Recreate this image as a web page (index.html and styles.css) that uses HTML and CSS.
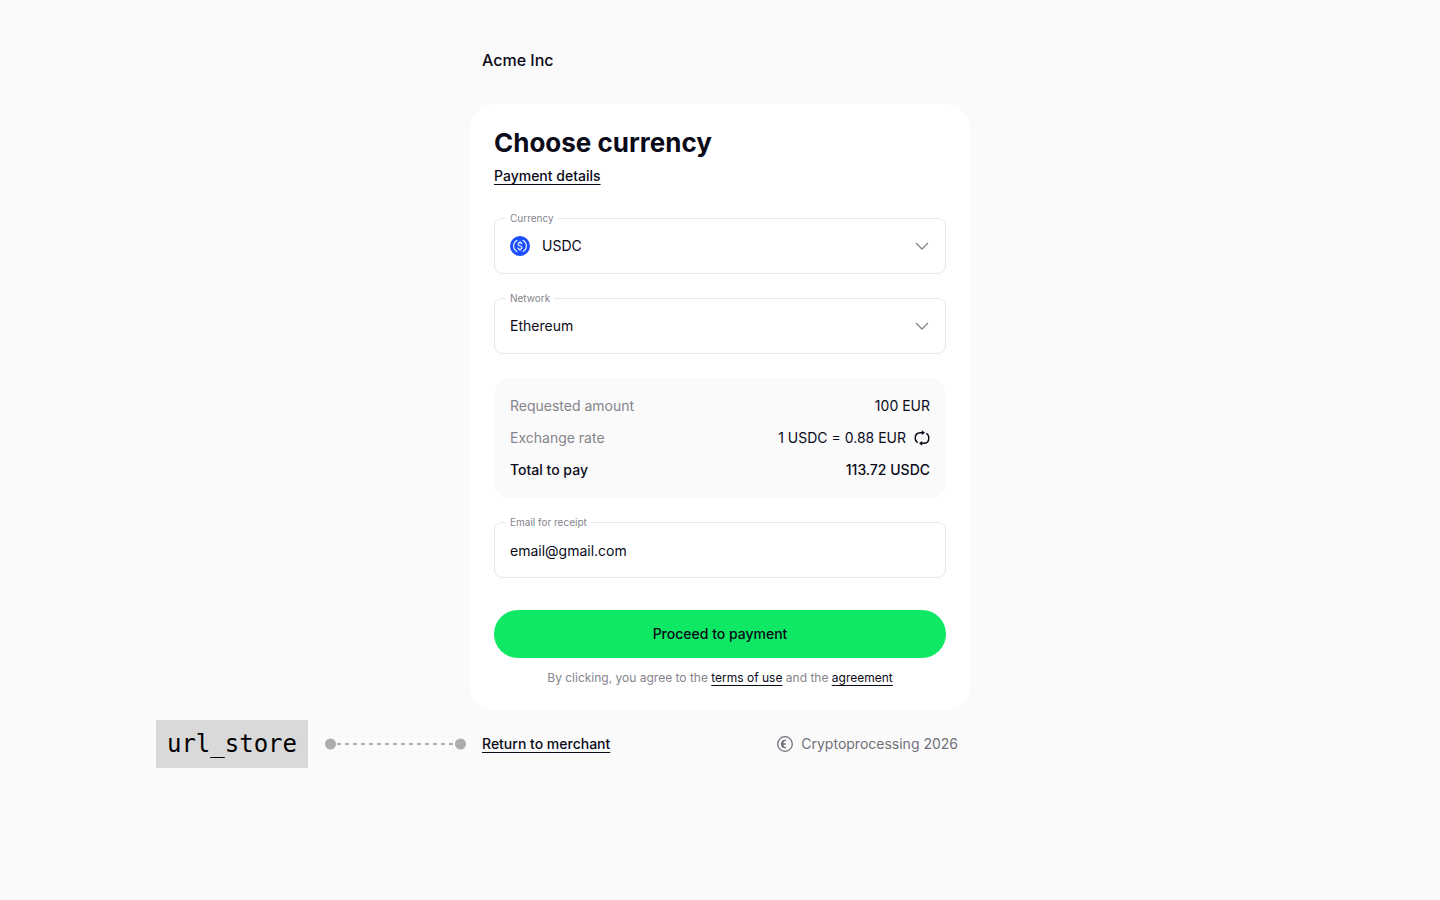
FILE: index.html
```html
<!DOCTYPE html>
<html lang="en">
<head>
<meta charset="utf-8">
<meta name="viewport" content="width=device-width, initial-scale=1">
<title>Choose currency</title>
<link rel="stylesheet" href="styles.css">
</head>
<body>
<div class="page">
  <header class="merchant">Acme Inc</header>
  <main class="card">
    <h1 class="title">Choose currency</h1>
    <a class="link details" href="#details">Payment details</a>
    <form class="form">
      <div class="field">
        <label class="field-label" for="currency">Currency</label>
        <svg class="coin" viewBox="0 0 20 20" aria-hidden="true">
          <circle cx="10" cy="10" r="10" fill="#1a4fff"/>
          <g fill="none" stroke="#fff" stroke-width="1.1">
            <path d="M7.300 4.300a6.300 6.300 0 0 0 0 11.400M12.700 4.300a6.300 6.300 0 0 1 0 11.400"/>
            <path d="M12 8.200C11.900 7.200 11.200 6.600 10 6.600S8 7.200 8 8.200c0 2.300 4.100 1.200 4.100 3.500 0 1-.9 1.600-2.100 1.600s-2.100-.6-2.200-1.700M10 5.300v1.300M10 13.300v1.400"/>
          </g>
        </svg>
        <select class="control" id="currency"><option>USDC</option></select>
        <svg class="chevron" viewBox="0 0 16 16" aria-hidden="true"><path d="M2 5l6 6 6-6"/></svg>
      </div>
      <div class="field">
        <label class="field-label" for="network">Network</label>
        <select class="control" id="network"><option>Ethereum</option></select>
        <svg class="chevron" viewBox="0 0 16 16" aria-hidden="true"><path d="M2 5l6 6 6-6"/></svg>
      </div>
      <dl class="summary">
        <div class="row"><dt>Requested amount</dt><dd>100 EUR</dd></div>
        <div class="row"><dt>Exchange rate</dt><dd>1 USDC = 0.88 EUR
          <svg class="refresh" viewBox="0 0 16 16" aria-hidden="true">
            <path class="arc" d="M3.700 12.600C2 11.700 1.200 10 1.200 8c0-3.200 2-5.300 5-5.300h3M12.300 3.400c1.700.9 2.500 2.600 2.500 4.600 0 3.200-2 5.300-5 5.300h-3"/>
            <path class="tip" d="M7.800.3l3.200 2.400-3.200 2.400zM8.200 10.900L5 13.300l3.200 2.400z"/>
          </svg></dd></div>
        <div class="row total"><dt>Total to pay</dt><dd>113.72 USDC</dd></div>
      </dl>
      <div class="field">
        <label class="field-label" for="email">Email for receipt</label>
        <input class="control" id="email" type="email" value="email@gmail.com">
      </div>
      <button class="submit" type="button">Proceed to payment</button>
    </form>
    <p class="terms">By clicking, you agree to the <a href="#terms">terms of use</a> and the <a href="#agreement">agreement</a></p>
  </main>
  <aside class="note">
    <code class="tag">url_store</code>
    <svg class="connector" viewBox="0 0 141 12" aria-hidden="true">
      <path d="M12 6h118" stroke="#adadad" stroke-width="2" stroke-dasharray="4 4"/>
      <circle cx="5.500" cy="6" r="5.500" fill="#adadad"/><circle cx="135.500" cy="6" r="5.500" fill="#adadad"/>
    </svg>
  </aside>
  <footer class="footer">
    <a class="link" href="#merchant">Return to merchant</a>
    <span class="brand">
      <svg class="logo" viewBox="0 0 16 16" fill="none" aria-hidden="true">
        <circle cx="8" cy="8" r="7.300" stroke="#717079" stroke-width="1.300"/>
        <path d="M9 4.500a3.600 3.600 0 1 0 0 7M5 8h3.800" stroke="#717079" stroke-width="1.300"/>
        <path d="M6.600 4.900a4 4 0 0 0 0 6.200" stroke="#717079" stroke-width="2"/>
      </svg>
      Cryptoprocessing 2026</span>
  </footer>
</div>
</body>
</html>
```
FILE: styles.css
```css
* { box-sizing: border-box; }
body {
  margin: 0;
  background: #fafafa;
  color: #0b0a19;
  font: 14px/20px Inter, sans-serif;
}
.page {
  display: grid;
  grid-template-columns: 1fr minmax(0, 500px) 1fr;
  padding: 48px 0;
}
.merchant {
  grid-column: 2;
  padding: 0 12px;
  margin-bottom: 32px;
  font-size: 16px;
  line-height: 24px;
  font-weight: 500;
}
.card {
  grid-column: 2;
  padding: 22px 24px 24px;
  background: #fff;
  border-radius: 24px;
}
.title {
  margin: 0 0 6px;
  font-size: 26px;
  line-height: 34px;
  font-weight: 700;
}
.link {
  color: inherit;
  font-size: 14px;
  font-weight: 500;
  text-decoration: underline;
  text-decoration-thickness: 1px;
  text-underline-offset: 3px;
}
.details { display: block; width: fit-content; }
.form { display: grid; gap: 24px; margin-top: 32px; }
.field {
  position: relative;
  display: flex;
  align-items: center;
  height: 56px;
  padding: 0 15px;
  border: 1px solid #e8e8ea;
  border-radius: 8px;
}
.field-label {
  position: absolute;
  top: -8px;
  left: 11px;
  padding: 0 4px;
  background: #fff;
  color: #85848c;
  font-size: 10px;
  line-height: 14px;
}
.control {
  flex: 1;
  min-width: 0;
  height: 100%;
  padding: 0;
  border: 0;
  outline: 0;
  appearance: none;
  background: transparent;
  color: inherit;
  font: inherit;
}
.coin { width: 20px; height: 20px; margin-right: 12px; }
.chevron {
  width: 16px;
  height: 16px;
  fill: none;
  stroke: #85848c;
  stroke-width: 1.3;
  pointer-events: none;
}
.summary {
  display: grid;
  gap: 12px;
  margin: 0;
  padding: 18px 16px;
  background: #fafafa;
  border-radius: 16px;
}
.row { display: flex; justify-content: space-between; color: #85848c; }
.row dd { display: flex; align-items: center; gap: 8px; margin: 0; color: #0b0a19; }
.row.total { color: #0b0a19; font-weight: 500; }
.refresh { width: 16px; height: 16px; }
.arc { fill: none; stroke: #0b0a19; stroke-width: 1.4; }
.tip { fill: #0b0a19; }
.submit {
  height: 48px;
  margin-top: 8px;
  border: 0;
  border-radius: 24px;
  background: #0fe865;
  color: #0b0a19;
  font: inherit;
  font-weight: 500;
}
.terms {
  margin: 12px 0 0;
  color: #85848c;
  font-size: 12px;
  line-height: 16px;
  text-align: center;
}
.terms a { color: #0b0a19; text-underline-offset: 3px; }
.note {
  grid-column: 1;
  display: flex;
  align-items: center;
  justify-content: flex-end;
  gap: 17px;
  margin-top: 10px;
  padding-right: 4px;
}
.tag {
  padding: 0 11px;
  background: #d9d9d9;
  color: #000;
  font: 24px/48px "DejaVu Sans Mono", monospace;
}
.connector { width: 141px; height: 12px; }
.footer {
  grid-column: 2;
  display: flex;
  align-items: center;
  justify-content: space-between;
  padding: 0 12px;
  margin-top: 10px;
}
.brand { display: flex; align-items: center; gap: 8px; color: #717079; }
.logo { width: 16px; height: 16px; }
```
